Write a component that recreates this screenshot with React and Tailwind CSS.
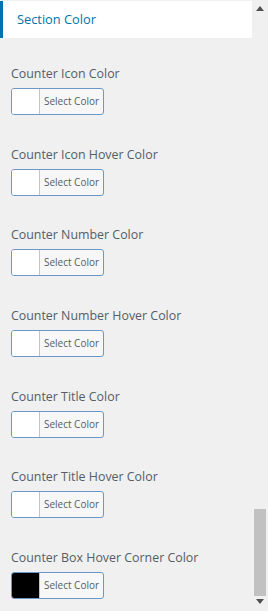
import React from "react";

const fields = [
  { label: "Counter Icon Color", color: "#ffffff" },
  { label: "Counter Icon Hover Color", color: "#ffffff" },
  { label: "Counter Number Color", color: "#ffffff" },
  { label: "Counter Number Hover Color", color: "#ffffff" },
  { label: "Counter Title Color", color: "#ffffff" },
  { label: "Counter Title Hover Color", color: "#ffffff" },
  { label: "Counter Box Hover Corner Color", color: "#000000" },
];

const ColorField = ({ label, color }) => (
  <div className="mb-[29.7px]">
    <div className="text-[12.4px] leading-[20px] text-[#555d66] mb-[4px]">{label}</div>
    <button className="flex h-[27px] w-[93px] rounded-[3px] border border-[#6b97c9] overflow-hidden bg-[#f7f7f7]">
      <span className="w-[28px] h-full border-r border-[#c3c4c7]" style={{ backgroundColor: color }} />
      <span className="flex-1 flex items-center justify-center text-[10px] text-[#555d66]">
        Select Color
      </span>
    </button>
  </div>
);

export default function App() {
  return (
    <div
      className="flex w-[268px] h-[611px] bg-[#f0f0f0] overflow-hidden"
      style={{ fontFamily: '"Open Sans", "Noto Sans", sans-serif' }}
    >
      <div className="flex-1 min-w-0">
        <div className="mt-px h-[37px] bg-white border-l-[3px] border-[#0073aa] flex items-center pl-[14px] text-[12.8px] text-[#0073aa]">
          Section Color
        </div>
        <div className="px-[11px] pt-[26px]">
          {fields.map((f) => (
            <ColorField key={f.label} {...f} />
          ))}
        </div>
      </div>
      {/* scrollbar */}
      <div className="w-[16px] flex flex-col items-center bg-[#f0f0f0]">
        <div className="h-[17px] flex items-center justify-center">
          <svg width="8" height="5" viewBox="0 0 8 5">
            <polygon points="4,0 8,5 0,5" fill="#505050" />
          </svg>
        </div>
        <div className="flex-1 w-full flex flex-col justify-end px-[2px] pb-[3px]">
          <div className="h-[87px] bg-[#c1c1c1]" />
        </div>
        <div className="h-[12px] flex items-start justify-center">
          <svg width="8" height="5" viewBox="0 0 8 5">
            <polygon points="0,0 8,0 4,5" fill="#505050" />
          </svg>
        </div>
      </div>
    </div>
  );
}
